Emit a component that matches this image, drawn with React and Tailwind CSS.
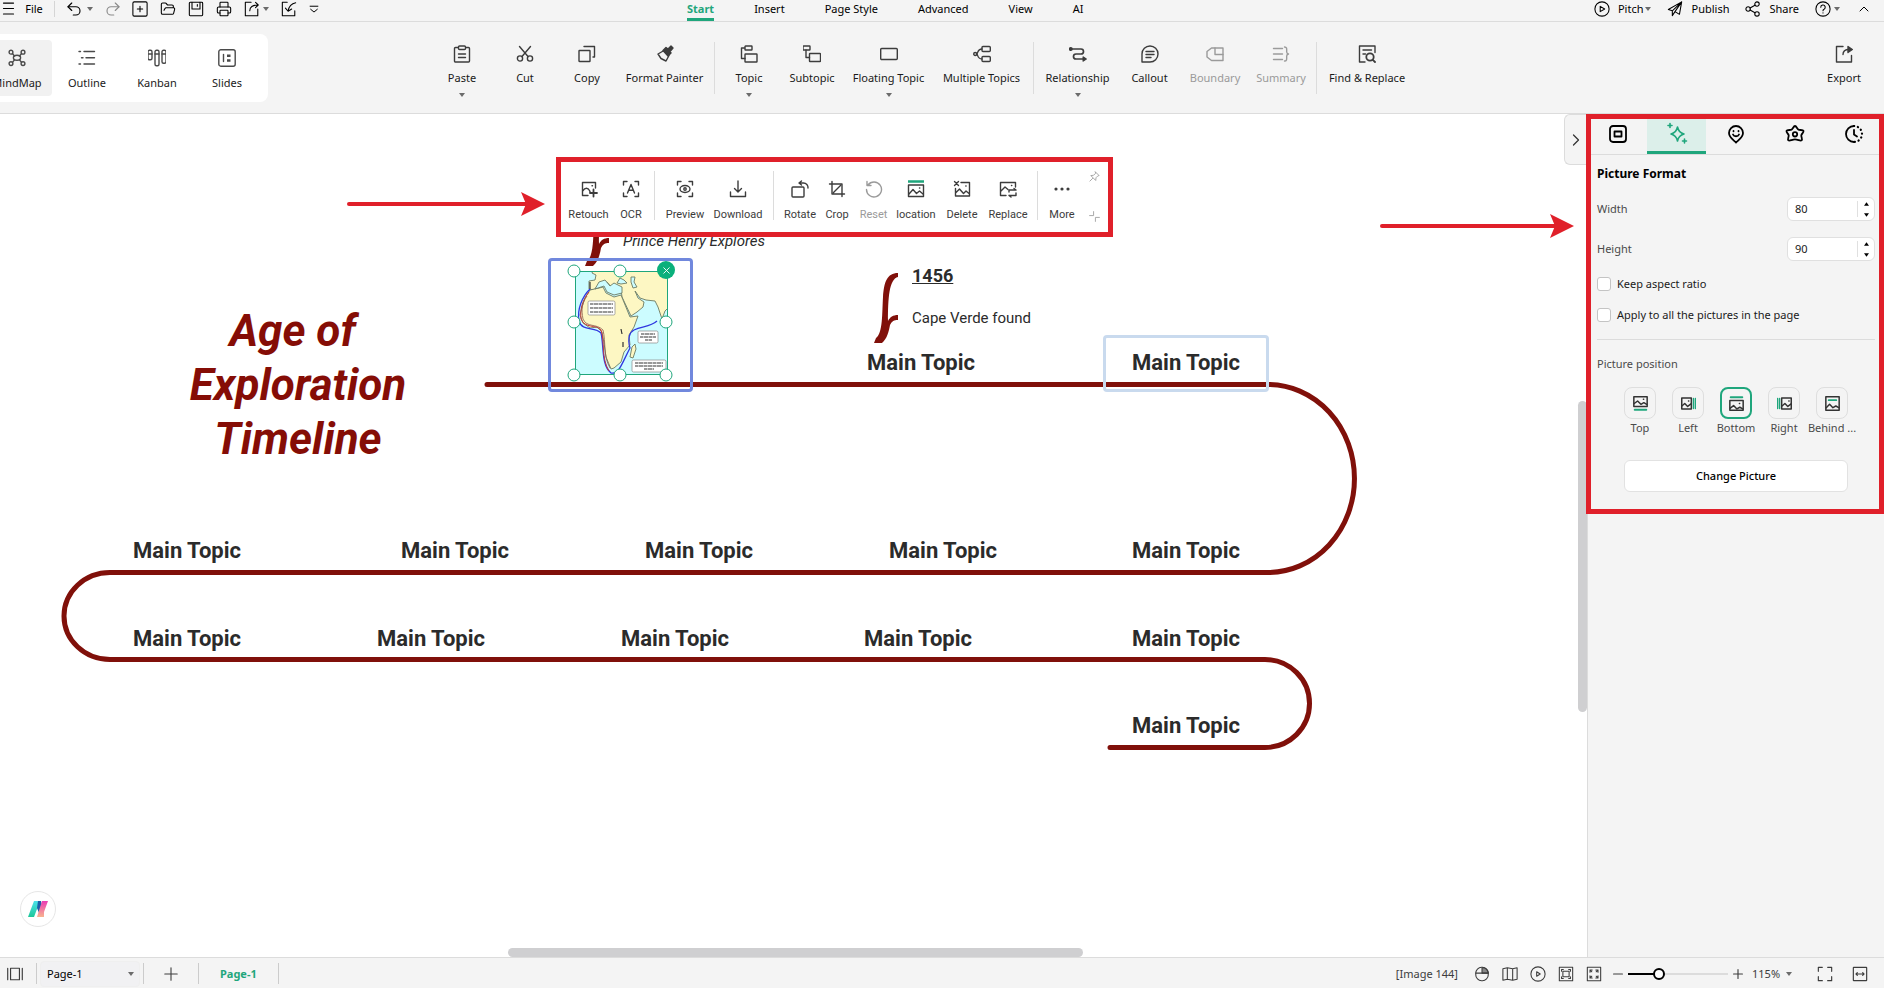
import React from 'react';
import { ChevronRight, ChevronUp, FolderOpen, Printer, Redo2, Undo2, X } from 'lucide-react';

function Icon({ size = 18, sw = 1.4, className = '', children }) {
  return (
    <svg
      width={size}
      height={size}
      viewBox="0 0 18 18"
      fill="none"
      stroke="currentColor"
      strokeWidth={sw}
      strokeLinecap="round"
      strokeLinejoin="round"
      className={`shrink-0 ${className}`}
      aria-hidden="true"
    >
      {children}
    </svg>
  );
}

function Caret({ className = '' }) {
  return (
    <svg width="6" height="4" viewBox="0 0 6 4" className={`shrink-0 fill-[#6b6b6b] ${className}`} aria-hidden="true">
      <path d="M0 0h6L3 4z" />
    </svg>
  );
}

const viewTabs = [
  {
    label: 'MindMap',
    icon: (
      <>
        <ellipse cx="9" cy="8.8" rx="3.6" ry="2.5" />
        <circle cx="3" cy="3.2" r="1.9" />
        <circle cx="15" cy="3.2" r="1.9" />
        <circle cx="3" cy="14.6" r="1.9" />
        <circle cx="15" cy="14.6" r="1.9" />
        <path d="M4.500 4.600L6.500 7M13.500 4.600L11.500 7M4.500 13.200l2-2.300M13.500 13.200l-2-2.300" />
      </>
    ),
  },
  {
    label: 'Outline',
    icon: <path d="M1 2.500h1.500M6 2.500h10.500M3.500 8.800H5M8 8.800h8.500M1 15h1.500M6 15h10.500" />,
  },
  {
    label: 'Kanban',
    icon: (
      <>
        <rect x="0" y="1.3" width="4" height="9.5" rx="1.5" />
        <rect x="7" y="1.3" width="4" height="15.5" rx="1.5" />
        <rect x="14" y="1.3" width="4" height="13" rx="1.5" />
        <path d="M0 5h4M7 5h4M14 5h4" />
      </>
    ),
  },
  {
    label: 'Slides',
    icon: (
      <>
        <rect x="0.8" y="0.8" width="16.4" height="16.4" rx="2" />
        <path d="M5.500 5.500v7" />
        <path d="M9 6.800h3.500M9 11.500h3.500" strokeWidth="2.4" strokeLinecap="butt" />
      </>
    ),
  },
];

const ribbonGroups = [
  [
    {
      label: 'Paste',
      width: 'w-16',
      menu: true,
      icon: (
        <>
          <rect x="1.5" y="2.5" width="15" height="14.5" rx="1" />
          <rect x="5.5" y="1" width="7" height="3.5" rx="1" className="fill-[#f4f4f4]" />
          <path d="M5.500 9h7M5.500 12.500h7" />
        </>
      ),
    },
    {
      label: 'Cut',
      width: 'w-[62px]',
      icon: (
        <>
          <circle cx="4" cy="13.5" r="2.6" />
          <circle cx="14" cy="13.5" r="2.6" />
          <path d="M3.500 1.500l8.500 10M14.500 1.500L6 11.500" />
        </>
      ),
    },
    {
      label: 'Copy',
      width: 'w-[62px]',
      icon: (
        <>
          <rect x="1" y="5.5" width="11" height="11" rx="0.5" />
          <path d="M6 1.500h10.500v10.500h-1.500" />
        </>
      ),
    },
    {
      label: 'Format Painter',
      width: 'w-[93px]',
      icon: (
        <>
          <path d="M2 9l6-3.500 5 5L10 16l-5-2.500z" />
          <path d="M7 5.500l3-3 2 1.500L15 1l2 2-3 3.500 1 1.500-3 3z" className="fill-[#3c3c3c]" />
        </>
      ),
    },
  ],
  [
    {
      label: 'Topic',
      width: 'w-[62px]',
      menu: true,
      icon: (
        <>
          <rect x="5" y="1" width="7" height="4" rx="0.5" />
          <rect x="5" y="9" width="12" height="8" rx="0.5" />
          <path d="M4.500 3H1.500v10.500H5" />
        </>
      ),
    },
    {
      label: 'Subtopic',
      width: 'w-16',
      icon: (
        <g transform="translate(0.5 0)">
          <rect x="-0.5" y="1" width="7" height="4" rx="0.5" />
          <rect x="6" y="8.5" width="11" height="8" rx="0.5" />
          <path d="M2.500 5v7.500H6" />
        </g>
      ),
    },
    {
      label: 'Floating Topic',
      width: 'w-[89px]',
      menu: true,
      icon: <rect x="0.7" y="3.5" width="16.6" height="11" rx="1" />,
    },
    {
      label: 'Multiple Topics',
      width: 'w-[97px]',
      icon: (
        <>
          <rect x="9" y="1.5" width="8.3" height="5" rx="1" />
          <rect x="9" y="11.5" width="8.3" height="5" rx="1" />
          <circle cx="2.2" cy="9" r="1.5" />
          <path d="M9 4C5 4 5 7 4 9c1 2 1 5 5 5" />
        </>
      ),
    },
  ],
  [
    {
      label: 'Relationship',
      width: 'w-[81px]',
      menu: true,
      icon: (
        <>
          <path d="M2 4h10a2.500 2.500 0 0 1 0 5H7a2.500 2.500 0 0 0 0 5h8" strokeWidth="1.7" />
          <circle cx="1.8" cy="4" r="1.3" fill="currentColor" />
          <path d="M14.200 12l3 2-3 2z" fill="currentColor" />
        </>
      ),
    },
    {
      label: 'Callout',
      width: 'w-[63px]',
      icon: (
        <>
          <path d="M1 9a8 8 0 1 1 8 8H1z" />
          <path d="M5 6.500h8M5 9.500h8M5 12.500h5" />
        </>
      ),
    },
    {
      label: 'Boundary',
      width: 'w-[68px]',
      disabled: true,
      icon: (
        <>
          <path d="M5.500 3H17v12.500H5.500L1 12V6.500z" />
          <path d="M9 3v6.500h8" />
        </>
      ),
    },
    {
      label: 'Summary',
      width: 'w-16',
      disabled: true,
      icon: (
        <>
          <path d="M1.500 3.500h9M1.500 9h9M1.500 14.500h9" />
          <path d="M12.500 2c3 0 2 3 2.200 5 .1 1.200.8 1.800 1.800 2-1 .2-1.700.8-1.800 2-.2 2 .8 5-2.200 5" />
        </>
      ),
    },
  ],
  [
    {
      label: 'Find & Replace',
      width: 'w-[94px]',
      icon: (
        <>
          <path d="M7 17H1.500V1h15.500v6.500M5 5h8.500M5 9h2.500" />
          <circle cx="12" cy="12" r="3.7" strokeWidth="1.8" />
          <path d="M14.800 14.800l2.200 2.200" strokeWidth="1.8" />
        </>
      ),
    },
  ],
];

const exportItem = {
  label: 'Export',
  width: 'w-16',
  icon: (
    <>
      <path d="M8 1.500H1.500v15.500h15v-6.500" />
      <path d="M8 9.500c0-3 2-5 6-5" />
      <path d="M13 1.500l4.300 3-4.300 3z" fill="currentColor" />
    </>
  ),
};

const pictureTools = [
  [
    {
      label: 'Retouch',
      width: 'w-[51px]',
      icon: (
        <>
          <path d="M8 15.500H2.500v-13h13V8" />
          <path d="M3 10.500c2-3 5-3 6.500 0l.8 2" />
          <path d="M13.500 9.500v7M10 13h7" strokeWidth="1.8" />
          <path d="M12 5.800h.5" />
        </>
      ),
    },
    {
      label: 'OCR',
      width: 'w-[34px]',
      icon: (
        <>
          <path d="M5 1.500H1.500V5M13 1.500h3.500V5M5 16.500H1.500V13M13 16.500h3.500V13" />
          <path d="M5.500 13L9 4.500l3.500 8.500M6.700 10.300h4.600" />
        </>
      ),
    },
  ],
  [
    {
      label: 'Preview',
      width: 'w-12',
      icon: (
        <>
          <path d="M5 1.500H1.500V5M13 1.500h3.500V5M5 16.500H1.500V13M13 16.500h3.500V13" />
          <ellipse cx="9" cy="9" rx="5" ry="3.5" />
          <circle cx="9" cy="9" r="1.2" />
        </>
      ),
    },
    {
      label: 'Download',
      width: 'w-[58px]',
      icon: <path d="M9 1v10.500M5.500 8.500L9 12l3.500-3.500M1.500 12v4.500h15V12" />,
    },
  ],
  [
    {
      label: 'Rotate',
      width: 'w-10',
      icon: (
        <>
          <rect x="1" y="7" width="12" height="10" rx="1" />
          <path d="M8 3h4.500a4.500 4.500 0 0 1 4.500 5M10.500 1L8 3 10.500 5" />
        </>
      ),
    },
    {
      label: 'Crop',
      width: 'w-[34px]',
      icon: <path d="M1.500 4h12.500v12.500M4 1.500V14h12.500M5.500 12.500l7-7" />,
    },
    {
      label: 'Reset',
      width: 'w-[39px]',
      disabled: true,
      icon: <path d="M3 5a7.500 7.500 0 1 1-1.500 4.500M2 1.500V5.500h4" />,
    },
    {
      label: 'location',
      width: 'w-[46px]',
      icon: (
        <>
          <path d="M1 1.500h16" className="stroke-[#1fa67c]" strokeWidth="2.5" strokeLinecap="butt" />
          <rect x="1.5" y="5" width="15" height="11.5" />
          <path d="M2 14l4-4.500 3.500 4 3-2.500 3.500 3M12.500 8h.3" />
        </>
      ),
    },
    {
      label: 'Delete',
      width: 'w-[46px]',
      icon: (
        <>
          <path d="M8 2.500h8.500v13.500h-14V8.500M2.500 13l4-4 4 4.500 2.500-2.500 3 2.500M12.800 6h.3" />
          <path d="M1.500 1.500l4 4M5.500 1.500l-4 4" />
        </>
      ),
    },
    {
      label: 'Replace',
      width: 'w-[46px]',
      icon: (
        <>
          <path d="M7 15.500H1.500v-13h15V7M2 11l4-4 3 2.500M12.500 5.500h.3" />
          <path d="M10 12v-2h7M15 8.500l2 1.500M17 13v2.500h-7M12 17l-2-1.500" />
        </>
      ),
    },
  ],
  [
    {
      label: 'More',
      width: 'w-9',
      icon: (
        <g fill="currentColor">
          <circle cx="3" cy="9" r="0.9" />
          <circle cx="9" cy="9" r="0.9" />
          <circle cx="15" cy="9" r="0.9" />
        </g>
      ),
    },
  ],
];

const panelTabs = [
  {
    label: 'Shape',
    icon: (
      <>
        <rect x="1" y="1" width="16" height="16" rx="3" />
        <rect x="5.5" y="6.5" width="7" height="5" />
      </>
    ),
  },
  {
    label: 'Picture',
    active: true,
    icon: (
      <>
        <path d="M9.500 2c.8 4 2.700 6 6.500 7-3.800 1-5.700 3-6.500 7-.8-4-2.700-6-6.500-7 3.800-1 5.700-3 6.500-7z" />
        <path d="M2-1.500v4M0 .5h4M16.500 14v4M14.500 16h4" />
      </>
    ),
  },
  {
    label: 'Mark',
    icon: (
      <>
        <path d="M9 17.500c-2-2-7-5-7-9.500a7 7 0 0 1 14 0c0 4.500-5 7.500-7 9.500z" />
        <path d="M6 9.500c1 2.300 5 2.300 6 0M6.500 6v.3M11.500 6v.3" />
      </>
    ),
  },
  {
    label: 'Clipart',
    icon: (
      <>
        <path d="M9 1c1.500 0 2.200 3 3.500 3.700 1.500.6 4.500-.2 5 1.200s-2 2.900-2.200 4.400c-.2 1.600 1.500 4 .3 5-1.300 1-3.700-1-6.600-1s-5.300 2-6.600 1c-1.200-1 .5-3.400.3-5C2.500 8.800 0 7.300.5 5.900s3.500-.6 5-1.200C6.800 4 7.500 1 9 1z" />
        <circle cx="9" cy="9.3" r="2.2" />
      </>
    ),
  },
  {
    label: 'Task',
    icon: (
      <>
        <path d="M9 1a8 8 0 0 0 0 16" />
        <path d="M9 5v4.500l3 2" />
        <path d="M9 1a8 8 0 0 1 0 16" strokeDasharray="0.2 3.8" strokeWidth="2.2" />
      </>
    ),
  },
];

const green = 'stroke-[#1fa67c]';
const positions = [
  {
    label: 'Top',
    icon: (
      <>
        <rect x="1" y="1" width="16" height="11.5" />
        <path d="M1.500 9l4-3 4 4 3.500-2 3.500 2M12.500 4h.3" />
        <path d="M2 16.500h14" className={green} strokeWidth="2.2" />
      </>
    ),
  },
  {
    label: 'Left',
    icon: (
      <>
        <rect x="0.9" y="2.5" width="11.5" height="13" />
        <path d="M1 12l3.500-3 3.500 3.500 4-3M9 6h.3" />
        <path d="M15 3v12M17.500 3v12" className={green} />
      </>
    ),
  },
  {
    label: 'Bottom',
    active: true,
    icon: (
      <>
        <path d="M2 1.500h14" className={green} strokeWidth="2.2" />
        <rect x="1" y="5.5" width="16" height="11.5" />
        <path d="M1.500 14.500l4-3 4 4 3.500-2 3.500 2M12.500 9h.3" />
      </>
    ),
  },
  {
    label: 'Right',
    icon: (
      <>
        <rect x="5.6" y="2.5" width="11.5" height="13" />
        <path d="M6 12l3.500-3 3.500 3.500 4-3M14.200 6h.3" />
        <path d="M.5 3v12M3 3v12" className={green} />
      </>
    ),
  },
  {
    label: 'Behind ...',
    icon: (
      <>
        <rect x="1" y="1" width="16" height="16" />
        <path d="M1.500 14l4-4 4 4 3.500-2 3.500 2" />
        <path d="M4.500 5h9" className={green} strokeWidth="2.2" />
      </>
    ),
  },
];

const topics = [
  [921, 249],
  [1186, 249],
  [187, 437],
  [455, 437],
  [699, 437],
  [943, 437],
  [1186, 437],
  [187, 525],
  [431, 525],
  [675, 525],
  [918, 525],
  [1186, 525],
  [1186, 612],
];

const handles = [
  [574, 157],
  [620, 157],
  [574, 208],
  [666, 208],
  [574, 261],
  [620, 261],
  [666, 261],
];

function TopBar() {
  return (
    <header className="flex h-[22px] shrink-0 border-b border-[#dcdcdc] text-[11px]/[18px] text-black">
      <div className="flex h-[17px] w-[687px] shrink-0 items-center">
        <button type="button" className="ml-[2px]" aria-label="Menu">
          <Icon size={13} sw={1.5}>
            <path d="M2 1.500h14M2 9h14M2 16.500h14" />
          </Icon>
        </button>
        <button type="button" className="ml-[9px] w-5">File</button>
        <span className="ml-[10px] h-4 w-px bg-[#d5d5d5]" />
        <button type="button" className="ml-[10px] flex items-center gap-1" aria-label="Undo">
          <Undo2 size={18} strokeWidth={1.5} />
          <Caret />
        </button>
        <button type="button" className="ml-[11px] text-[#8a8a8a]" aria-label="Redo">
          <Redo2 size={18} strokeWidth={1.5} />
        </button>
        <div className="ml-[10px] flex items-center gap-3">
          <button type="button" aria-label="New">
            <Icon size={16} sw={1.2}>
              <rect x="1" y="1" width="16" height="16" rx="1.5" />
              <path d="M9 6v6M6 9h6" />
            </Icon>
          </button>
          <button type="button" aria-label="Open">
            <FolderOpen size={16} strokeWidth={1.6} />
          </button>
          <button type="button" aria-label="Save">
            <Icon size={16} sw={1.2}>
              <rect x="1.5" y="1.5" width="15" height="15" rx="1" />
              <path d="M4.500 1.500V9h9V1.500M10.500 4v2" />
            </Icon>
          </button>
          <button type="button" aria-label="Print">
            <Printer size={16} strokeWidth={1.6} />
          </button>
          <button type="button" className="flex items-center gap-[3px]" aria-label="Share file">
            <Icon size={16} sw={1.2}>
              <path d="M8 1.500H1.500v15h14V9" />
              <path d="M6.500 11c0-4 3-6.500 9.500-6.500M13 1.500l3 3-3 3" />
            </Icon>
            <Caret />
          </button>
          <button type="button" aria-label="Import">
            <Icon size={16} sw={1.2}>
              <path d="M7 1.500H1.500v15h14V11" />
              <path d="M16.500 2C12 3 9 6 8 11M5 8l3 3.500L12 9" />
            </Icon>
          </button>
          <button type="button" aria-label="Customize">
            <Icon size={10} sw={1.8}>
              <path d="M2 4h14M3 9.500l6 5 6-5" />
            </Icon>
          </button>
        </div>
      </div>
      <nav className="flex gap-10">
        <a href="#start" className="border-b-[3px] border-[#1fa67c] font-bold text-[#1fa67c]">Start</a>
        <a href="#insert">Insert</a>
        <a href="#page-style">Page Style</a>
        <a href="#advanced">Advanced</a>
        <a href="#view">View</a>
        <a href="#ai">AI</a>
      </nav>
      <div className="ml-auto flex h-[17px] items-center pr-3">
        <button type="button" className="flex items-center gap-2">
          <Icon size={16} sw={1.2}>
            <circle cx="9" cy="9" r="8" />
            <path d="M7 6l5 3-5 3z" />
          </Icon>
          Pitch
        </button>
        <Caret className="ml-[2px]" />
        <button type="button" className="ml-4 flex items-center gap-2">
          <Icon size={16} sw={1.2}>
            <path d="M1.500 9.500L16.500 1l-2.500 14-5-3-3 4.500V11zM6 11L16.500 1 9 12" />
          </Icon>
          Publish
        </button>
        <button type="button" className="ml-4 flex items-center gap-2">
          <Icon size={16} sw={1.2}>
            <circle cx="3.5" cy="9" r="2.5" />
            <circle cx="13.5" cy="3.5" r="2.5" />
            <circle cx="13.5" cy="14.5" r="2.5" />
            <path d="M5.700 7.800l5.500-3M5.700 10.200l5.500 3" />
          </Icon>
          Share
        </button>
        <button type="button" className="ml-4 flex items-center gap-[3px]" aria-label="Help">
          <Icon size={16} sw={1.2}>
            <circle cx="9" cy="9" r="8" />
            <path d="M6.500 7a2.500 2.500 0 1 1 3.700 2.200c-.8.400-1.200.9-1.200 1.800M9 13.300v.2" />
          </Icon>
          <Caret />
        </button>
        <button type="button" className="ml-4" aria-label="Collapse ribbon">
          <ChevronUp size={16} strokeWidth={1.5} />
        </button>
      </div>
    </header>
  );
}

function RibbonButton({ item }) {
  return (
    <button
      type="button"
      disabled={item.disabled}
      className={`flex flex-col items-center text-[#3c3c3c] disabled:text-[#9a9a9a] ${item.width}`}
    >
      <Icon>{item.icon}</Icon>
      <span className={`mt-[7px] text-[11px]/4 whitespace-nowrap ${item.disabled ? '' : 'text-[#1a1a1a]'}`}>
        {item.label}
      </span>
      {item.menu && <Caret className="mt-[7px]" />}
    </button>
  );
}

function Ribbon() {
  return (
    <div className="flex h-[92px] shrink-0 items-start border-b border-[#dcdcdc]">
      <div className="mt-3 -ml-[18px] flex h-[68px] shrink-0 items-center rounded-r-lg bg-white pr-[6px]">
        {viewTabs.map((tab, index) => (
          <button
            key={tab.label}
            type="button"
            className={`flex h-14 w-[70px] flex-col items-center rounded-r-sm pt-[9px] text-[#4a4a4a] ${index === 0 ? 'bg-[#f1f1f1]' : ''}`}
          >
            <Icon>{tab.icon}</Icon>
            <span className="mt-2 text-[11px]/4 text-[#1a1a1a]">{tab.label}</span>
          </button>
        ))}
      </div>
      <div className="ml-[162px] flex shrink-0">
        {ribbonGroups.map((group, index) => (
          <React.Fragment key={group[0].label}>
            {index > 0 && <span className="mx-[3px] mt-5 h-[52px] w-px bg-[#dcdcdc]" />}
            <div className="flex items-start pt-[23px]">
              {group.map((item) => (
                <RibbonButton key={item.label} item={item} />
              ))}
            </div>
          </React.Fragment>
        ))}
      </div>
      <div className="mr-2 ml-auto flex pt-[23px]">
        <RibbonButton item={exportItem} />
      </div>
    </div>
  );
}

function PictureToolbar() {
  return (
    <div className="absolute top-[43px] left-[556px] flex h-20 w-[557px] border-[5px] border-[#e0202a] bg-white pl-[2px]">
      {pictureTools.map((group, index) => (
        <React.Fragment key={group[0].label}>
          {index > 0 && <span className="mx-[6px] mt-[9px] h-[49px] w-px bg-[#dcdcdc]" />}
          <div className="flex pt-[18px]">
            {group.map((item) => (
              <button
                key={item.label}
                type="button"
                disabled={item.disabled}
                className={`flex flex-col items-center text-[#3c3c3c] disabled:text-[#9a9a9a] ${item.width}`}
              >
                <Icon>{item.icon}</Icon>
                <span className="mt-[9px] text-[11px]/4">{item.label}</span>
              </button>
            ))}
          </div>
        </React.Fragment>
      ))}
      <div className="mr-2 ml-auto flex flex-col justify-between pt-[9px] pb-[10px] text-[#9a9a9a]">
        <button type="button" aria-label="Pin toolbar">
          <Icon size={11}>
            <path d="M10.500 1.500l6 6-2 .5-3 3-.5 4.500-8-8 4.500-.5 3-3zM6 12l-4.500 4.500" />
          </Icon>
        </button>
        <button type="button" aria-label="Shrink toolbar">
          <Icon size={11}>
            <path d="M7.500 1v6.500H1M10.500 17v-6.500H17" />
          </Icon>
        </button>
      </div>
    </div>
  );
}

function ExplorationMap() {
  return (
    <svg width="93" height="104" viewBox="0 0 93 104" className="absolute top-[157px] left-[575px]" role="img" aria-label="Map of exploration routes around Africa">
      <rect width="93" height="104" fill="#ccfcff" />
      <g fill="#fdf7c3" stroke="#6c7a62" strokeWidth="0.9" strokeLinejoin="round">
        <path d="M18-1l-1 3 4 2-1 5-6 1v8l5 1 6-7 7-1 6 7 3-2 5 2 1 8 9 19 6-4 6-5 1-5-6-4-3-7 5 7 6 2 9 1 3 6 4 12 3-8 6-6V-1z" />
        <path d="M15 19l9-2 4-1 3 6 8 4 7-2 9 22 8-1-4 11-5 8 1 10-6 7-3 10-7 6-3 1-5-12-2-14-2-11-5-5-7 1-7-5-3-8 2-8 3-9z" />
        <path d="M57 76l3-3 1 5-3 9-3-1z" />
        <path d="M20 18l4-7 6-2 5 6 4-3 8 4v6l-8 2-7-3-3-6z" fill="#ccfcff" />
        <path d="M42 12l3-5 4 2 3 3-6 1z" fill="#ccfcff" />
        <path d="M56 6l4 0-1 5 3 5-4 1-2-6z" fill="#ccfcff" />
      </g>
      <path d="M46 58l1 5M48 71v5M15 11v7" stroke="#333" strokeWidth="1.2" />
      <path d="M15 18C7 26 2 38 4 50c3 11 16 5 22 12 3 12 0 32 10 40 8 2 11-10 19-25-3-10 0-16 4-18 8-4 16-3 23-9" fill="none" stroke="#3038e0" strokeWidth="1.3" />
      <path d="M14 21C7 30 5 38 6 48c4 10 15 5 20 11 4 12 0 28 8 41" fill="none" stroke="#c8383a" strokeWidth="1" />
      <path d="M12 25C7 32 6 38 8 48c4 9 13 4 20 11 3 12 0 26 7 38" fill="none" stroke="#8a5b4c" strokeWidth="0.8" />
      <g fill="#fff" stroke="#888" strokeWidth="0.7">
        <rect x="13" y="30" width="27" height="14" rx="1.5" />
        <rect x="63" y="60" width="20" height="12" rx="1.5" />
        <rect x="57" y="89" width="34" height="12" rx="1.5" />
      </g>
      <path
        d="M15 33h23M15 37h23M15 41h23M66 63h14M65 66h16M70 69h7M60 92h28M60 95h28M69 98h10"
        stroke="#777"
        strokeWidth="1.3"
        strokeDasharray="3 0.5 5 0.5"
      />
    </svg>
  );
}

const brace = 'M24 0C13 0 10 9 9 24C8 40 9 60 2 65L0 70H8C13 66 15 58 16 52C18 48 20 47 24 47V42C19 42 16 44 14 48C14 26 15 6 24 4Z';

function Canvas() {
  return (
    <main className="relative min-w-0 flex-1 overflow-hidden bg-white font-['Roboto',sans-serif] text-[#2b2b2b]">
      <svg className="absolute inset-0 h-full w-full" fill="none" aria-hidden="true">
        <path
          d="M487 270.500H1268A86.500 94 0 0 1 1268 458.500H110A46 43.500 0 0 0 110 545.500H1265A44.500 44 0 0 1 1265 633.500H1110"
          stroke="#80100a"
          strokeWidth="5"
          strokeLinecap="round"
        />
        <path d={brace} fill="#80100a" transform="translate(585 82)" />
        <path d={brace} fill="#80100a" transform="translate(874 159)" />
      </svg>

      <h1 className="absolute top-[190px] left-[298px] -translate-x-1/2 text-center text-[44px]/[54px] font-bold text-[#850d06] italic">
        Age of&nbsp;
        <br />
        Exploration
        <br />
        Timeline
      </h1>

      {topics.map(([x, y]) => (
        <span
          key={`${x}-${y}`}
          style={{ left: x, top: y }}
          className="absolute -translate-x-1/2 -translate-y-1/2 text-[22px]/7 font-bold whitespace-nowrap"
        >
          Main Topic
        </span>
      ))}
      <span className="absolute top-[117px] left-[623px] text-[15px]/5 whitespace-nowrap italic">Prince Henry Explores</span>
      <span className="absolute top-[150px] left-[912px] text-[18px]/6 font-bold underline">1456</span>
      <span className="absolute top-[192px] left-[912px] text-[15px]/6 whitespace-nowrap">Cape Verde found</span>

      <div className="absolute top-[221px] left-[1103px] h-[57px] w-[166px] rounded border-[3px] border-[#c9daee]" />
      <div className="absolute top-36 left-[548px] h-[134px] w-[145px] rounded border-[3px] border-[#7188dd]" />
      <ExplorationMap />
      <div className="absolute top-[157px] left-[575px] h-[104px] w-[93px] border border-[#1fa67c]" />
      {handles.map(([x, y]) => (
        <span
          key={`${x}-${y}`}
          style={{ left: x, top: y }}
          className="absolute size-[13px] -translate-x-1/2 -translate-y-1/2 rounded-full border border-[#1fa67c] bg-white"
        />
      ))}
      <button
        type="button"
        className="absolute top-[147px] left-[657px] flex size-[18px] items-center justify-center rounded-full bg-[#0bb07b] text-white"
        aria-label="Remove picture"
      >
        <X size={11} strokeWidth={2} />
      </button>

      <PictureToolbar />

      <svg className="pointer-events-none absolute inset-0 h-full w-full" aria-hidden="true">
        <g fill="#e0202a" stroke="#e0202a" strokeLinecap="round">
          <path d="M349 90H530" strokeWidth="4" />
          <path d="M545 90L521 78L526 90L521 102Z" stroke="none" />
          <path d="M1382 112H1558" strokeWidth="4" />
          <path d="M1574 112L1550 100L1555 112L1550 124Z" stroke="none" />
        </g>
      </svg>

      <button
        type="button"
        className="absolute top-0 right-0 flex h-[51px] w-[23px] items-center justify-center rounded-l-md border border-r-0 border-[#dcdcdc] bg-[#f4f4f4] text-[#333]"
        aria-label="Collapse panel"
      >
        <ChevronRight size={20} strokeWidth={1.5} />
      </button>
      <button
        type="button"
        className="absolute bottom-[30px] left-5 flex size-9 items-center justify-center rounded-full border border-[#e6e6e6] bg-white"
        aria-label="AI assistant"
      >
        <svg width="20" height="18" viewBox="0 0 20 18" aria-hidden="true">
          <defs>
            <linearGradient id="teal" x1="0" y1="0" x2="0" y2="1">
              <stop offset="0" stopColor="#4be3ea" />
              <stop offset="1" stopColor="#1fc79a" />
            </linearGradient>
            <linearGradient id="pink" x1="0" y1="0" x2="0" y2="1">
              <stop offset="0" stopColor="#e93bb4" />
              <stop offset="1" stopColor="#f8b48f" />
            </linearGradient>
          </defs>
          <path d="M6 1h6L6 17H0z" fill="url(#teal)" />
          <path d="M10 1h3l1 5-3 7-2-5z" fill="#1d5fa8" />
          <path d="M14 1h6l-4 11v5H9z" fill="url(#pink)" />
        </svg>
      </button>
      <div className="absolute bottom-0 left-[508px] h-[9px] w-[575px] rounded-full bg-[#cfcfd1]" />
      <div className="absolute top-[287px] right-0 h-[311px] w-[9px] rounded-full bg-[#cfcfd1]" />
    </main>
  );
}

function SizeField({ id, label, value }) {
  return (
    <div className="flex h-6 items-center justify-between text-[#4a4a4a]">
      <label htmlFor={id}>{label}</label>
      <div className="flex h-6 w-[88px] items-center rounded-md border border-[#e0e0e0] bg-white">
        <input id={id} defaultValue={value} className="w-[69px] pl-[7px] text-[#1a1a1a] outline-none" />
        <span className="h-4 w-px bg-[#e0e0e0]" />
        <div className="flex flex-1 flex-col items-center gap-[7px]">
          <button type="button" aria-label={`Increase ${label}`}>
            <svg width="5" height="4" viewBox="0 0 6 4" className="block">
              <path d="M0 4h6L3 0z" />
            </svg>
          </button>
          <button type="button" aria-label={`Decrease ${label}`}>
            <svg width="5" height="4" viewBox="0 0 6 4" className="block">
              <path d="M0 0h6L3 4z" />
            </svg>
          </button>
        </div>
      </div>
    </div>
  );
}

function FormatPanel() {
  return (
    <aside className="relative w-[297px] shrink-0 border-l border-[#dcdcdc] text-[11px]/4 text-[#1a1a1a]">
      <div className="grid h-[41px] grid-cols-5 border-b border-[#dcdcdc]">
        {panelTabs.map((tab) => (
          <button
            key={tab.label}
            type="button"
            aria-label={tab.label}
            className={`flex items-center justify-center border-b-[3px] pt-[3px] ${tab.active ? 'border-[#1fa67c] bg-[#dcefea] text-[#1fa67c]' : 'border-transparent text-black'}`}
          >
            <Icon sw={tab.active ? 1.6 : 1.8} className="overflow-visible">{tab.icon}</Icon>
          </button>
        ))}
      </div>
      <div className="px-[9px]">
        <h2 className="mt-[11px] text-[12px]/4 font-bold text-black">Picture Format</h2>
        <div className="mt-[15px] flex flex-col gap-4">
          <SizeField id="picture-width" label="Width" value="80" />
          <SizeField id="picture-height" label="Height" value="90" />
        </div>
        <div className="mt-[15px] flex flex-col gap-[15px]">
          {['Keep aspect ratio', 'Apply to all the pictures in the page'].map((text) => (
            <label key={text} className="flex items-center gap-[6px]">
              <input type="checkbox" className="size-[14px] appearance-none rounded-[3px] border border-[#c4c4c4] bg-white" />
              {text}
            </label>
          ))}
        </div>
        <div className="mt-4 border-t border-[#dcdcdc] pt-4 text-[#4a4a4a]">
          <h3>Picture position</h3>
          <div className="mt-[15px] ml-[19px] flex">
            {positions.map((item) => (
              <button key={item.label} type="button" className="flex w-12 flex-col items-center whitespace-nowrap">
                <span
                  className={`flex size-8 items-center justify-center rounded-lg text-[#333] ${item.active ? 'border-2 border-[#1fa67c]' : 'border border-[#dedede]'}`}
                >
                  <Icon size={15} sw={1.8}>{item.icon}</Icon>
                </span>
                <span className="mt-px">{item.label}</span>
              </button>
            ))}
          </div>
          <button type="button" className="mt-6 ml-[27px] h-8 w-56 rounded-md border border-[#e2e2e2] bg-white font-medium text-black">
            Change Picture
          </button>
        </div>
      </div>
      <div className="pointer-events-none absolute top-0 right-0 -left-0.5 h-[400px] border-[5px] border-[#e0202a]" />
    </aside>
  );
}

function StatusBar() {
  const divider = <span className="h-[21px] w-px bg-[#cccccc]" />;
  return (
    <footer className="flex h-[31px] shrink-0 items-center border-t border-[#dcdcdc] pt-px text-[11px]/4 text-[#3c3c3c]">
      <button type="button" className="mr-[13px] ml-[7px]" aria-label="Page view">
        <Icon size={16} sw={1.3}>
          <rect x="4" y="2.5" width="10" height="13" />
          <path d="M.8 2.500v13M17.200 2.500v13" />
        </Icon>
      </button>
      {divider}
      <div className="relative mx-[3px] flex items-center">
        <select aria-label="Current page" className="h-[26px] w-[100px] appearance-none rounded border border-[#efefef] bg-[#f1f1f3] pl-[6px] text-black">
          <option>Page-1</option>
        </select>
        <Caret className="pointer-events-none absolute right-[6px]" />
      </div>
      {divider}
      <button type="button" className="mx-5" aria-label="Add page">
        <Icon size={14}>
          <path d="M9 1v16M1 9h16" />
        </Icon>
      </button>
      {divider}
      <a href="#page-1" className="mx-[21px] font-bold text-[#1fa67c]">Page-1</a>
      {divider}

      <div className="ml-auto flex items-center pr-4">
        <span>[Image 144]</span>
        <div className="ml-4 flex items-center gap-3">
          <button type="button" aria-label="Mouse mode">
            <Icon size={16} sw={1.2}>
              <path d="M9 2h1a6 6 0 0 1 6 6H9z" fill="#888" />
              <rect x="2" y="1.5" width="14" height="15" rx="6.5" />
              <path d="M2 8h14" />
            </Icon>
          </button>
          <button type="button" aria-label="Overview map">
            <Icon size={16} sw={1.2}>
              <path d="M1 3l5-1 6 1 5-1v13l-5 1-6-1-5 1zM6 2v13M12 3v13" />
            </Icon>
          </button>
          <button type="button" aria-label="Present">
            <Icon size={16} sw={1.2}>
              <circle cx="9" cy="9" r="8" />
              <path d="M7.500 6.500l4 2.500-4 2.500z" />
            </Icon>
          </button>
          <button type="button" aria-label="Fit page">
            <Icon size={16} sw={1.2}>
              <rect x="1.5" y="1.5" width="15" height="15" />
              <rect x="5.5" y="6" width="7" height="6" />
              <path d="M4 6V4h2M12 4h2v2M4 12v2h2M12 14h2v-2" />
            </Icon>
          </button>
          <button type="button" aria-label="Full screen">
            <Icon size={16} sw={1.2}>
              <rect x="1.5" y="1.5" width="15" height="15" />
              <path d="M4.500 7V4.500H7M11 4.500h2.500V7M4.500 11v2.500H7M11 13.500h2.500V11M4.500 4.500l2 2M13.500 4.500l-2 2M4.500 13.500l2-2M13.500 13.500l-2-2" />
            </Icon>
          </button>
        </div>
        <button type="button" className="ml-[11px]" aria-label="Zoom out">
          <Icon size={10} sw={2}>
            <path d="M1 9h16" />
          </Icon>
        </button>
        <input
          type="range"
          aria-label="Zoom"
          min="0"
          max="100"
          defaultValue="28"
          className="mx-[5px] h-[2px] w-[100px] appearance-none bg-[linear-gradient(to_right,#000_30%,#dcdcdc_30%)] [&::-webkit-slider-thumb]:size-3 [&::-webkit-slider-thumb]:appearance-none [&::-webkit-slider-thumb]:rounded-full [&::-webkit-slider-thumb]:border-2 [&::-webkit-slider-thumb]:border-black [&::-webkit-slider-thumb]:bg-white"
        />
        <button type="button" aria-label="Zoom in">
          <Icon size={10} sw={2}>
            <path d="M9 1v16M1 9h16" />
          </Icon>
        </button>
        <div className="relative ml-[9px] flex items-center">
          <select aria-label="Zoom level" className="w-10 appearance-none">
            <option>115%</option>
          </select>
          <Caret className="pointer-events-none absolute right-0" />
        </div>
        <button type="button" className="ml-[25px]" aria-label="Expand">
          <Icon size={16} sw={1.3}>
            <path d="M6 1.500H1.500V6M12 1.500h4.500V6M6 16.500H1.500V12M12 16.500h4.500V12" />
          </Icon>
        </button>
        <button type="button" className="ml-[19px]" aria-label="Fit width">
          <Icon size={16} sw={1.3}>
            <rect x="1.5" y="1.5" width="15" height="15" rx="0.5" />
            <path d="M4.500 9h9M6 7.500L4.500 9 6 10.500M12 7.500L13.500 9 12 10.500" />
          </Icon>
        </button>
      </div>
    </footer>
  );
}

export default function App() {
  return (
    <div className="flex h-screen flex-col overflow-hidden bg-[#f4f4f4] font-['Noto_Sans',sans-serif]">
      <TopBar />
      <Ribbon />
      <div className="flex min-h-0 flex-1">
        <Canvas />
        <FormatPanel />
      </div>
      <StatusBar />
    </div>
  );
}
